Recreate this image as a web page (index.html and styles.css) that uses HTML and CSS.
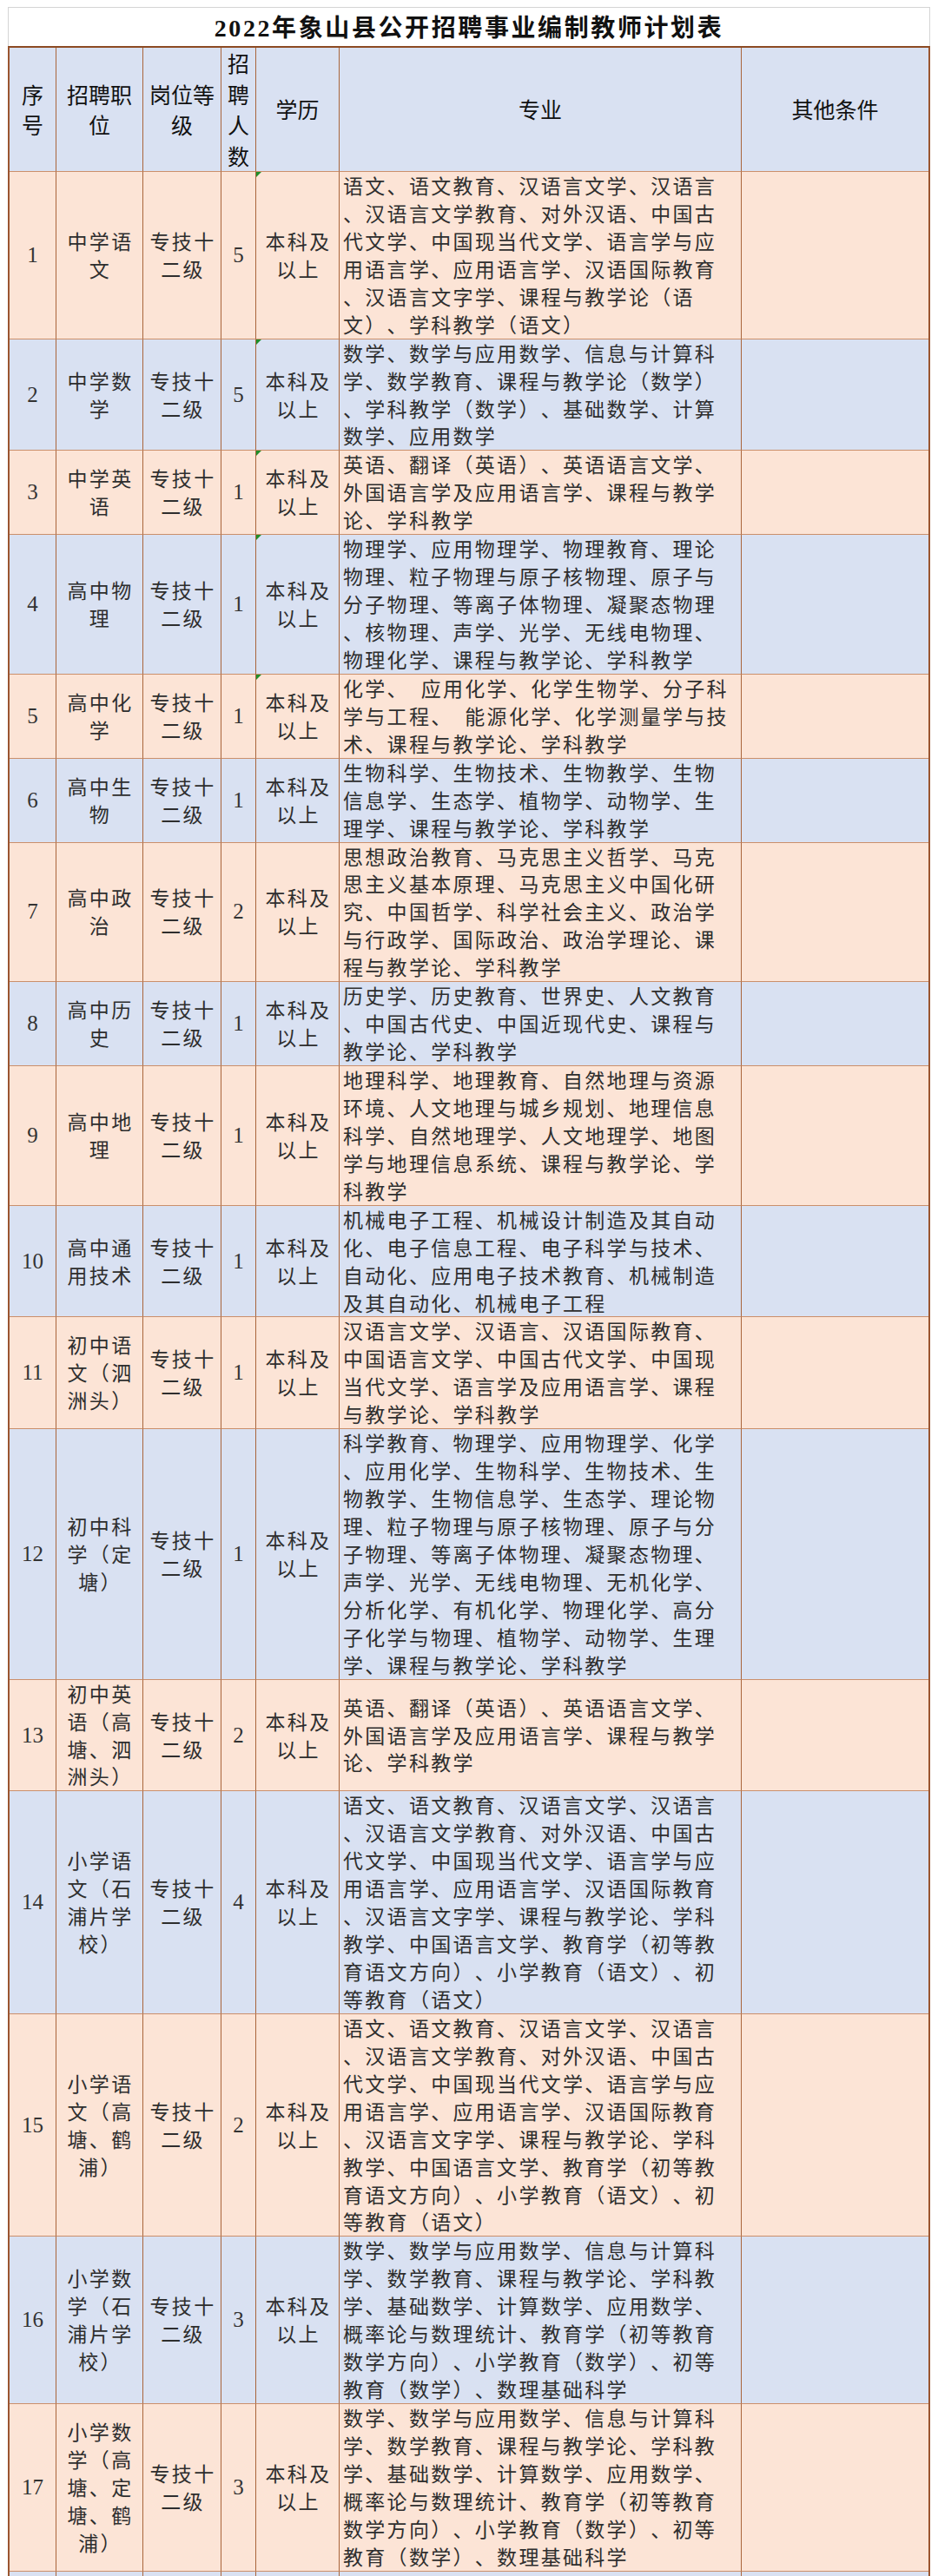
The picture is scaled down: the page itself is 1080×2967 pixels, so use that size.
FILE: index.html
```html
<!DOCTYPE html>
<html lang="zh-CN">
<head>
<meta charset="utf-8">
<title>2022年象山县公开招聘事业编制教师计划表</title>
<link rel="stylesheet" href="styles.css">
</head>
<body>
<div class="page">
  <div class="sheet">
    <div class="title">2022年象山县公开招聘事业编制教师计划表</div>
    <table class="plan">
      <colgroup>
        <col class="c-no"><col class="c-post"><col class="c-grade"><col class="c-num"><col class="c-edu"><col class="c-spec"><col class="c-other">
      </colgroup>
      <thead>
        <tr class="head">
          <th class="hs">序<br>号</th>
          <th>招聘职<br>位</th>
          <th>岗位等<br>级</th>
          <th class="hs">招<br>聘<br>人<br>数</th>
          <th>学历</th>
          <th>专业</th>
          <th class="last">其他条件</th>
        </tr>
      </thead>
      <tbody>
        <tr class="peach">
          <td class="num">1</td><td class="ctr">中学语<br>文</td><td class="ctr">专技十<br>二级</td><td class="num">5</td><td class="ctr flag">本科及<br>以上</td>
          <td class="spec">语文、语文教育、汉语言文学、汉语言<br>、汉语言文学教育、对外汉语、中国古<br>代文学、中国现当代文学、语言学与应<br>用语言学、应用语言学、汉语国际教育<br>、汉语言文字学、课程与教学论（语<br>文）、学科教学（语文）</td><td class="last"></td>
        </tr>
        <tr class="blue">
          <td class="num">2</td><td class="ctr">中学数<br>学</td><td class="ctr">专技十<br>二级</td><td class="num">5</td><td class="ctr flag">本科及<br>以上</td>
          <td class="spec">数学、数学与应用数学、信息与计算科<br>学、数学教育、课程与教学论（数学）<br>、学科教学（数学）、基础数学、计算<br>数学、应用数学</td><td class="last"></td>
        </tr>
        <tr class="peach">
          <td class="num">3</td><td class="ctr">中学英<br>语</td><td class="ctr">专技十<br>二级</td><td class="num">1</td><td class="ctr flag">本科及<br>以上</td>
          <td class="spec">英语、翻译（英语）、英语语言文学、<br>外国语言学及应用语言学、课程与教学<br>论、学科教学</td><td class="last"></td>
        </tr>
        <tr class="blue">
          <td class="num">4</td><td class="ctr">高中物<br>理</td><td class="ctr">专技十<br>二级</td><td class="num">1</td><td class="ctr flag">本科及<br>以上</td>
          <td class="spec">物理学、应用物理学、物理教育、理论<br>物理、粒子物理与原子核物理、原子与<br>分子物理、等离子体物理、凝聚态物理<br>、核物理、声学、光学、无线电物理、<br>物理化学、课程与教学论、学科教学</td><td class="last"></td>
        </tr>
        <tr class="peach">
          <td class="num">5</td><td class="ctr">高中化<br>学</td><td class="ctr">专技十<br>二级</td><td class="num">1</td><td class="ctr flag">本科及<br>以上</td>
          <td class="spec">化学、&ensp;应用化学、化学生物学、分子科<br>学与工程、&ensp;能源化学、化学测量学与技<br>术、课程与教学论、学科教学</td><td class="last"></td>
        </tr>
        <tr class="blue">
          <td class="num">6</td><td class="ctr">高中生<br>物</td><td class="ctr">专技十<br>二级</td><td class="num">1</td><td class="ctr">本科及<br>以上</td>
          <td class="spec">生物科学、生物技术、生物教学、生物<br>信息学、生态学、植物学、动物学、生<br>理学、课程与教学论、学科教学</td><td class="last"></td>
        </tr>
        <tr class="peach">
          <td class="num">7</td><td class="ctr">高中政<br>治</td><td class="ctr">专技十<br>二级</td><td class="num">2</td><td class="ctr">本科及<br>以上</td>
          <td class="spec">思想政治教育、马克思主义哲学、马克<br>思主义基本原理、马克思主义中国化研<br>究、中国哲学、科学社会主义、政治学<br>与行政学、国际政治、政治学理论、课<br>程与教学论、学科教学</td><td class="last"></td>
        </tr>
        <tr class="blue">
          <td class="num">8</td><td class="ctr">高中历<br>史</td><td class="ctr">专技十<br>二级</td><td class="num">1</td><td class="ctr">本科及<br>以上</td>
          <td class="spec">历史学、历史教育、世界史、人文教育<br>、中国古代史、中国近现代史、课程与<br>教学论、学科教学</td><td class="last"></td>
        </tr>
        <tr class="peach">
          <td class="num">9</td><td class="ctr">高中地<br>理</td><td class="ctr">专技十<br>二级</td><td class="num">1</td><td class="ctr">本科及<br>以上</td>
          <td class="spec">地理科学、地理教育、自然地理与资源<br>环境、人文地理与城乡规划、地理信息<br>科学、自然地理学、人文地理学、地图<br>学与地理信息系统、课程与教学论、学<br>科教学</td><td class="last"></td>
        </tr>
        <tr class="blue">
          <td class="num">10</td><td class="ctr">高中通<br>用技术</td><td class="ctr">专技十<br>二级</td><td class="num">1</td><td class="ctr">本科及<br>以上</td>
          <td class="spec">机械电子工程、机械设计制造及其自动<br>化、电子信息工程、电子科学与技术、<br>自动化、应用电子技术教育、机械制造<br>及其自动化、机械电子工程</td><td class="last"></td>
        </tr>
        <tr class="peach">
          <td class="num">11</td><td class="ctr">初中语<br>文（泗<br>洲头）</td><td class="ctr">专技十<br>二级</td><td class="num">1</td><td class="ctr">本科及<br>以上</td>
          <td class="spec">汉语言文学、汉语言、汉语国际教育、<br>中国语言文学、中国古代文学、中国现<br>当代文学、语言学及应用语言学、课程<br>与教学论、学科教学</td><td class="last"></td>
        </tr>
        <tr class="blue">
          <td class="num">12</td><td class="ctr">初中科<br>学（定<br>塘）</td><td class="ctr">专技十<br>二级</td><td class="num">1</td><td class="ctr">本科及<br>以上</td>
          <td class="spec">科学教育、物理学、应用物理学、化学<br>、应用化学、生物科学、生物技术、生<br>物教学、生物信息学、生态学、理论物<br>理、粒子物理与原子核物理、原子与分<br>子物理、等离子体物理、凝聚态物理、<br>声学、光学、无线电物理、无机化学、<br>分析化学、有机化学、物理化学、高分<br>子化学与物理、植物学、动物学、生理<br>学、课程与教学论、学科教学</td><td class="last"></td>
        </tr>
        <tr class="peach">
          <td class="num">13</td><td class="ctr">初中英<br>语（高<br>塘、泗<br>洲头）</td><td class="ctr">专技十<br>二级</td><td class="num">2</td><td class="ctr">本科及<br>以上</td>
          <td class="spec">英语、翻译（英语）、英语语言文学、<br>外国语言学及应用语言学、课程与教学<br>论、学科教学</td><td class="last"></td>
        </tr>
        <tr class="blue">
          <td class="num">14</td><td class="ctr">小学语<br>文（石<br>浦片学<br>校）</td><td class="ctr">专技十<br>二级</td><td class="num">4</td><td class="ctr">本科及<br>以上</td>
          <td class="spec">语文、语文教育、汉语言文学、汉语言<br>、汉语言文学教育、对外汉语、中国古<br>代文学、中国现当代文学、语言学与应<br>用语言学、应用语言学、汉语国际教育<br>、汉语言文字学、课程与教学论、学科<br>教学、中国语言文学、教育学（初等教<br>育语文方向）、小学教育（语文）、初<br>等教育（语文）</td><td class="last"></td>
        </tr>
        <tr class="peach">
          <td class="num">15</td><td class="ctr">小学语<br>文（高<br>塘、鹤<br>浦）</td><td class="ctr">专技十<br>二级</td><td class="num">2</td><td class="ctr">本科及<br>以上</td>
          <td class="spec">语文、语文教育、汉语言文学、汉语言<br>、汉语言文学教育、对外汉语、中国古<br>代文学、中国现当代文学、语言学与应<br>用语言学、应用语言学、汉语国际教育<br>、汉语言文字学、课程与教学论、学科<br>教学、中国语言文学、教育学（初等教<br>育语文方向）、小学教育（语文）、初<br>等教育（语文）</td><td class="last"></td>
        </tr>
        <tr class="blue">
          <td class="num">16</td><td class="ctr">小学数<br>学（石<br>浦片学<br>校）</td><td class="ctr">专技十<br>二级</td><td class="num">3</td><td class="ctr">本科及<br>以上</td>
          <td class="spec">数学、数学与应用数学、信息与计算科<br>学、数学教育、课程与教学论、学科教<br>学、基础数学、计算数学、应用数学、<br>概率论与数理统计、教育学（初等教育<br>数学方向）、小学教育（数学）、初等<br>教育（数学）、数理基础科学</td><td class="last"></td>
        </tr>
        <tr class="peach">
          <td class="num">17</td><td class="ctr">小学数<br>学（高<br>塘、定<br>塘、鹤<br>浦）</td><td class="ctr">专技十<br>二级</td><td class="num">3</td><td class="ctr">本科及<br>以上</td>
          <td class="spec">数学、数学与应用数学、信息与计算科<br>学、数学教育、课程与教学论、学科教<br>学、基础数学、计算数学、应用数学、<br>概率论与数理统计、教育学（初等教育<br>数学方向）、小学教育（数学）、初等<br>教育（数学）、数理基础科学</td><td class="last"></td>
        </tr>
        <tr class="blue tail">
          <td></td><td></td><td></td><td></td><td></td><td></td><td class="last"></td>
        </tr>
      </tbody>
    </table>
  </div>
</div>
</body>
</html>
```

FILE: styles.css
```css
html, body {
  margin: 0;
  padding: 0;
  background: #ffffff;
}

.page {
  height: 2967px;
  overflow: hidden;
  padding: 8px 0 0 9px;
  box-sizing: border-box;
}

.sheet {
  width: 1062px;
}

.title {
  box-sizing: border-box;
  height: 45px;
  border-top: 1px solid #d4d4d4;
  border-left: 1px solid #d4d4d4;
  border-right: 1px solid #d4d4d4;
  padding-top: 3px;
  line-height: 41px;
  text-align: center;
  font-family: "Liberation Serif", "Noto Sans CJK SC", serif;
  font-weight: 700;
  font-size: 28px;
  letter-spacing: 2.6px;
  color: #111111;
  text-spacing-trim: space-all;
}

.plan {
  width: 1062px;
  table-layout: fixed;
  border-collapse: separate;
  border-spacing: 0;
  border-top: 2px solid #8c4a22;
  border-left: 2px solid #9a5530;
  border-right: 2px solid #9a5530;
  font-family: "Noto Sans CJK SC", sans-serif;
  text-spacing-trim: space-all;
}

.c-no { width: 54px; }
.c-post { width: 100px; }
.c-grade { width: 90px; }
.c-num { width: 40px; }
.c-edu { width: 96px; }
.c-spec { width: 463px; }
.c-other { width: 215px; }

.plan th,
.plan td {
  padding: 0;
  border-right: 1px solid #a9653c;
  border-bottom: 1px solid #cb8f6b;
  vertical-align: middle;
}

.plan th.last,
.plan td.last {
  border-right: none;
}

.head th {
  height: 142px;
  background: #d9e1f2;
  font-weight: 400;
  font-size: 25px;
  line-height: 35.5px;
  color: #111111;
  text-align: center;
  white-space: nowrap;
}

.peach td { background: #fce4d6; }
.blue td { background: #d9e1f2; }

.plan td {
  font-size: 23px;
  line-height: 31.94px;
  letter-spacing: 2.3px;
  color: #2e2e2e;
  white-space: nowrap;
}

.plan td.ctr {
  text-align: center;
  padding-left: 2px;
}

.plan td.num {
  text-align: center;
  font-family: "Liberation Serif", serif;
  font-size: 25px;
  letter-spacing: 0;
  color: #333333;
}

.plan td.spec {
  text-align: left;
  padding-left: 4px;
}

.plan td.flag {
  position: relative;
}

.plan td.flag::before {
  content: "";
  position: absolute;
  left: 0;
  top: 0;
  border-top: 6px solid #1f8f2a;
  border-right: 6px solid transparent;
}

.tail td {
  height: 120px;
}
```
